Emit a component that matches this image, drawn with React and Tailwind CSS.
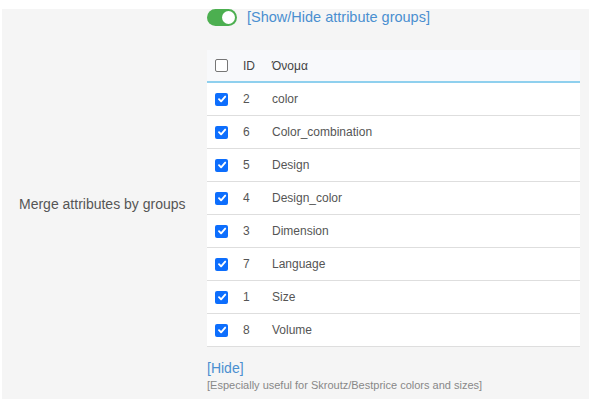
import React from "react";

const rows = [
  [2, "color"],
  [6, "Color_combination"],
  [5, "Design"],
  [4, "Design_color"],
  [3, "Dimension"],
  [7, "Language"],
  [1, "Size"],
  [8, "Volume"],
];

function Check({ checked }) {
  if (!checked)
    return <span className="block w-[13px] h-[13px] rounded-[2px] border border-[#767676] bg-white" />;
  return (
    <span className="flex items-center justify-center w-[13px] h-[13px] rounded-[2px] bg-[#0d6efd]">
      <svg width="10" height="10" viewBox="0 0 10 10">
        <path d="M2 5.2 L4.1 7.3 L8.2 2.6" fill="none" stroke="white" strokeWidth="1.9" strokeLinecap="round" strokeLinejoin="round" />
      </svg>
    </span>
  );
}

export default function App() {
  return (
    <div className="w-[595px] h-[403px] bg-white pt-[9px] pl-[2px]" style={{ fontFamily: '"Liberation Sans", Arial, sans-serif' }}>
      <div className="w-[587px] h-[390px] bg-[#f5f5f5] flex items-center">
        <div className="w-[205px] pl-[17px] text-[14px] text-[#555]">Merge attributes by groups</div>
        <div className="w-[373px] h-full flex flex-col">
          <div className="flex items-center h-[17px] gap-[10px]">
            <span className="relative block w-[30px] h-[17px] rounded-full bg-[#4caf50]">
              <span className="absolute right-[2px] top-[2px] w-[13px] h-[13px] rounded-full bg-white" />
            </span>
            <span className="text-[14.5px] text-[#4a8fd0] leading-none">[Show/Hide attribute groups]</span>
          </div>
          <div className="mt-[24px] bg-white text-[12px] text-[#555]">
            <div className="flex items-center h-[33px] bg-[#f8f9fb] border-b-2 border-[#8fd0ee]">
              <span className="w-[36px] pl-[8px]"><Check checked={false} /></span>
              <span className="w-[29px] text-[#444]">ID</span>
              <span className="text-[#444]">Όνομα</span>
            </div>
            {rows.map(([id, name]) => (
              <div key={id} className="flex items-center h-[33px] border-b border-[#dedede]">
                <span className="w-[36px] pl-[8px]"><Check checked /></span>
                <span className="w-[29px]">{id}</span>
                <span>{name}</span>
              </div>
            ))}
          </div>
          <div className="mt-[12px] text-[14px] leading-[18px] text-[#4a8fd0]">[Hide]</div>
          <div className="mt-[1px] text-[11px] leading-[14px] text-[#888]">[Especially useful for Skroutz/Bestprice colors and sizes]</div>
        </div>
      </div>
    </div>
  );
}
